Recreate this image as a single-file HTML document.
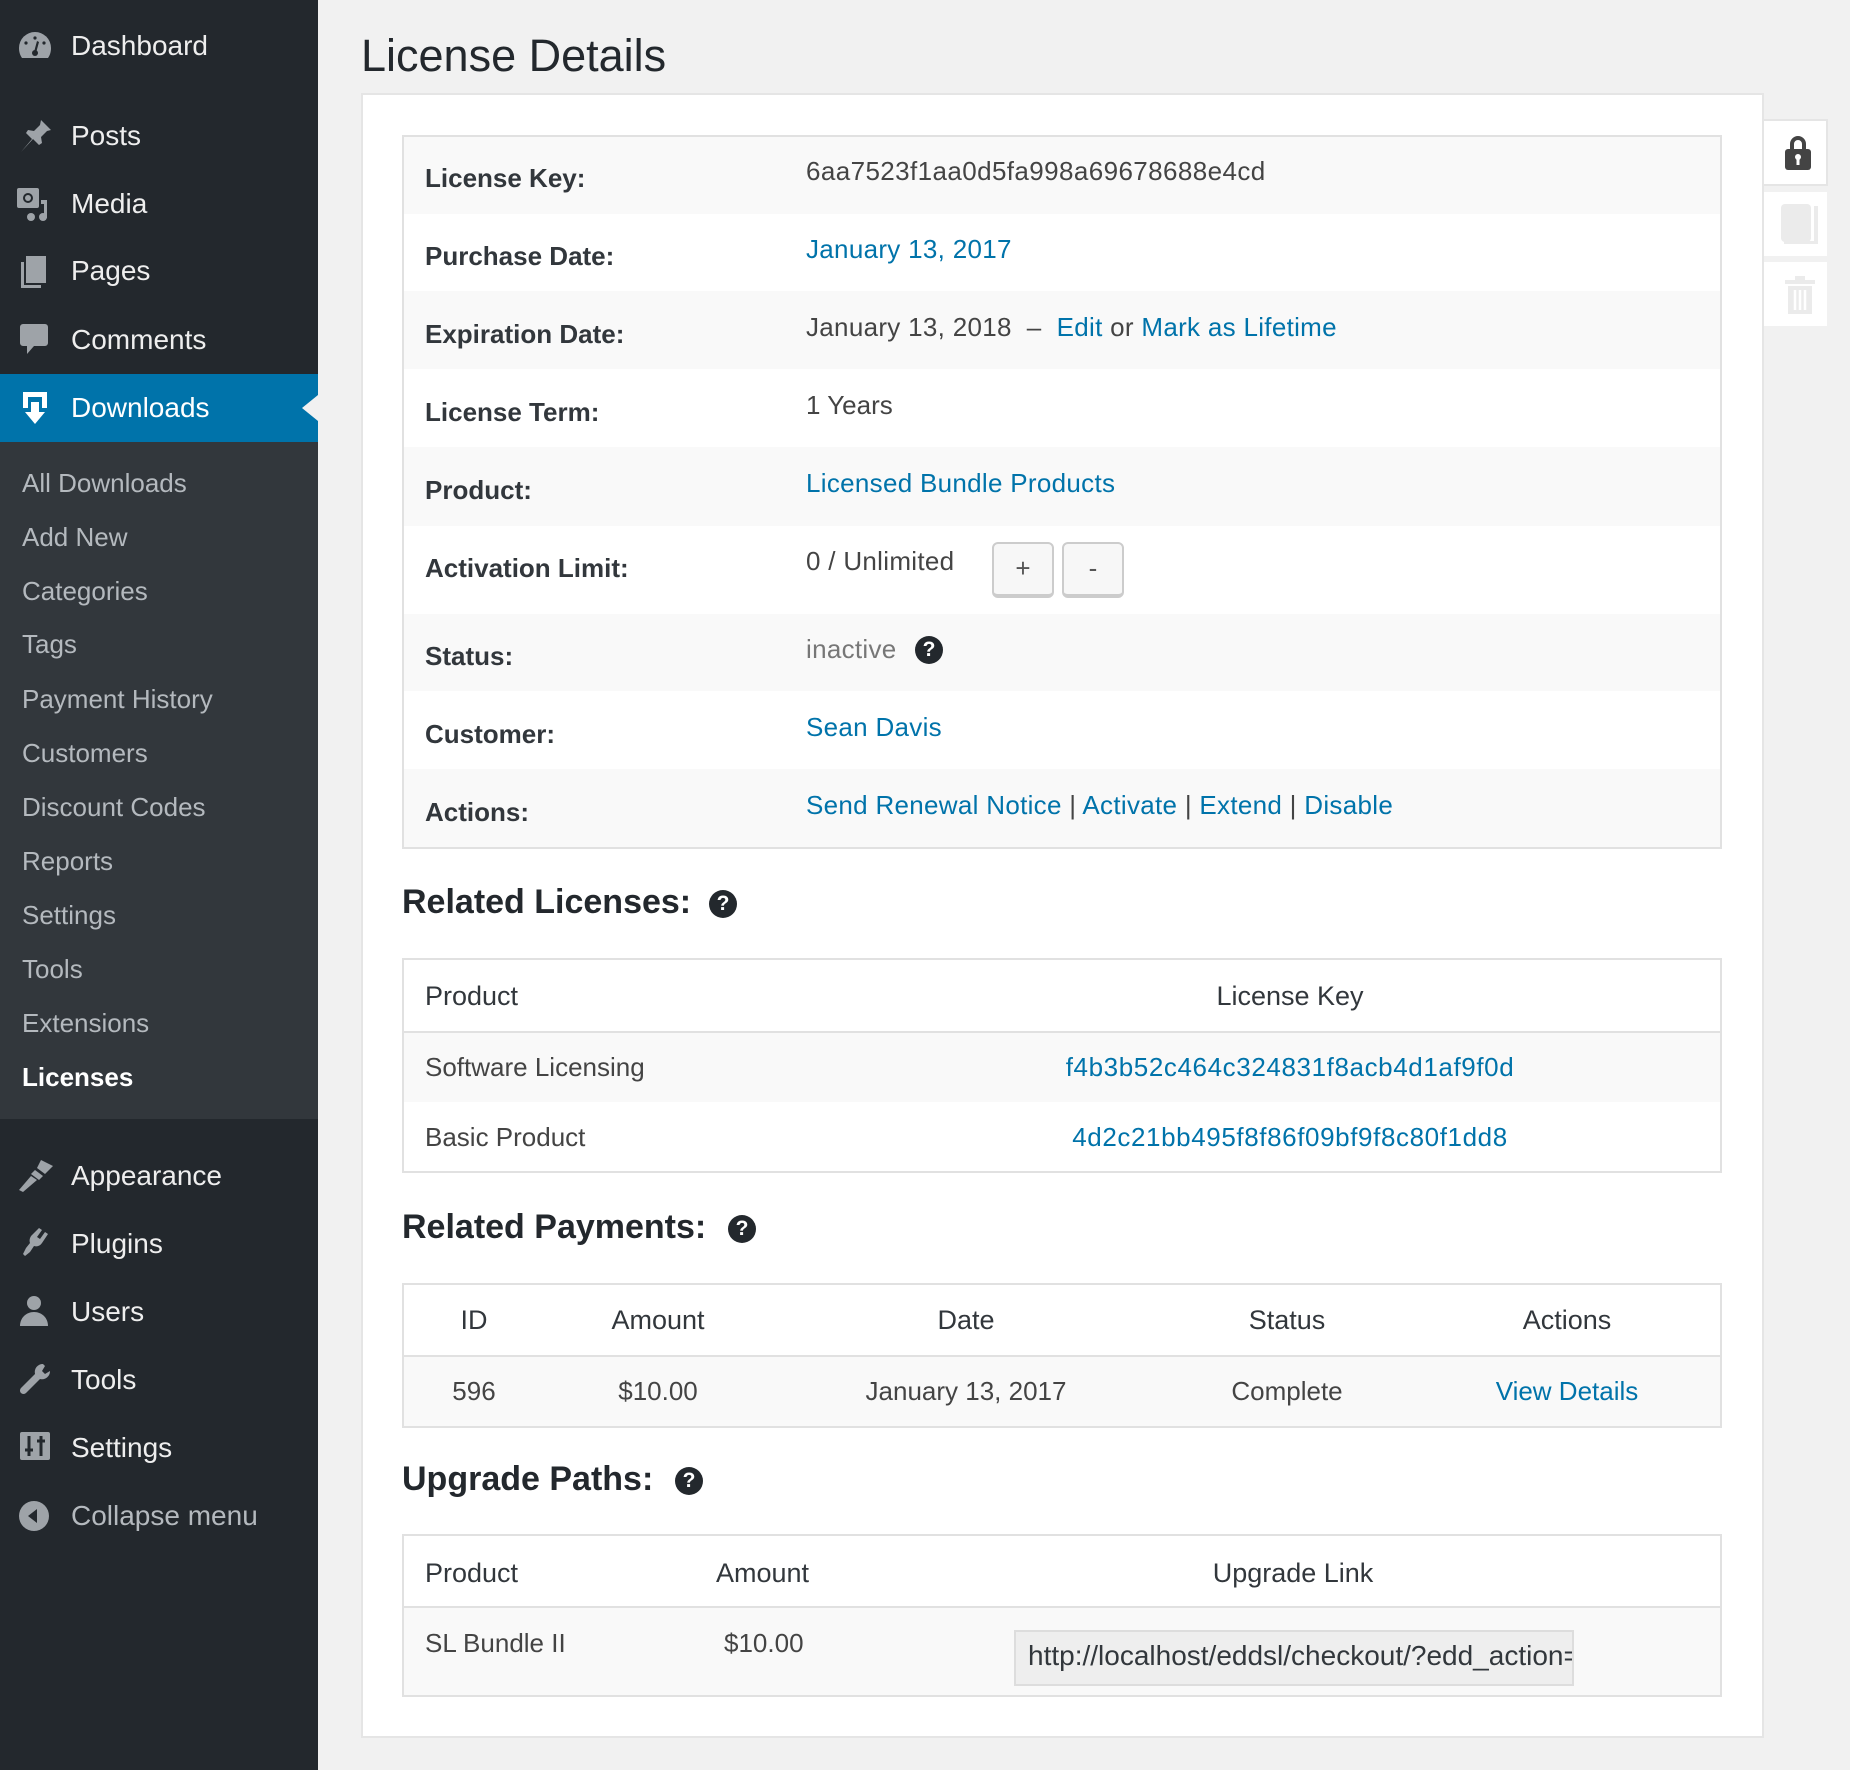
<!DOCTYPE html>
<html><head><meta charset="utf-8"><style>
*{margin:0;padding:0;box-sizing:border-box}
body{width:1850px;height:1770px;background:#f1f1f1;font-family:"Liberation Sans",sans-serif;position:relative;overflow:hidden}
.a{position:absolute;white-space:nowrap;line-height:40px;height:40px;transform:translateY(-50%)}
#sb{position:absolute;left:0;top:0;width:318px;height:1770px;background:#23282d}
.m{color:#eee;font-size:28px;left:71px}
.s{color:#b4b9be;font-size:26px;left:22px}
.ic{position:absolute;left:17px}
.box{position:absolute;background:#fff;border:2px solid #e5e5e5}
.row{position:absolute;left:404px;width:1316px}
.lb{left:425px;font-size:26px;font-weight:bold;color:#32373c}
.v{left:806px;font-size:26px;color:#444}
.h{left:402px;font-size:34px;font-weight:bold;color:#23282d}
.q{position:absolute;width:28px;height:28px;border-radius:50%;background:#23282d;color:#fff;font-size:21px;font-weight:bold;text-align:center;line-height:28px;transform:translateY(-50%)}
.c{font-size:27px;color:#32373c}
.l{color:#0073aa !important}
.ctr{transform:translate(-50%,-50%)}
.btn{position:absolute;width:62px;height:56px;background:#f7f7f7;border:2px solid #ccc;border-bottom-width:4px;border-radius:6px;font-size:26px;color:#555;text-align:center;line-height:48px}
</style></head><body>
<div id="sb">
<div style="position:absolute;top:374px;left:0;width:318px;height:68px;background:#0073aa"></div>
<div style="position:absolute;top:395px;left:302px;width:0;height:0;border-top:13px solid transparent;border-bottom:13px solid transparent;border-right:16px solid #f1f1f1"></div>
<div style="position:absolute;top:442px;left:0;width:318px;height:677px;background:#32373c"></div>
</div>
<svg class="ic" style="top:30px" width="36" height="32" viewBox="0 0 36 32"><path d="M18 2A16 16 0 0 0 2 18c0 4 1 7 3 10h26c2-3 3-6 3-10A16 16 0 0 0 18 2z" fill="#9ea3a8"/><circle cx="18" cy="23" r="3" fill="#23282d"/><path d="M17 22l3-11 2 1-3 11z" fill="#23282d"/><circle cx="9" cy="13" r="1.6" fill="#23282d"/><circle cx="27" cy="13" r="1.6" fill="#23282d"/><circle cx="18" cy="8" r="1.6" fill="#23282d"/></svg>
<svg class="ic" style="top:118px" width="36" height="36" viewBox="0 0 36 36"><path d="M24 2l10 10-4 1-6 6 1 6-3 2-6-6-12 13 11-13-6-6 2-3 6 1 6-6z" fill="#9ea3a8"/></svg>
<svg class="ic" style="top:186px" width="36" height="36" viewBox="0 0 36 36"><rect x="0" y="2" width="22" height="20" rx="2" fill="#9ea3a8"/><circle cx="11" cy="12" r="5" fill="#23282d"/><circle cx="11" cy="12" r="3" fill="#9ea3a8"/><path d="M24 14h6v18h-3V18h-3z" fill="#9ea3a8"/><circle cx="14" cy="31" r="4" fill="#9ea3a8"/><circle cx="26" cy="31" r="4" fill="#9ea3a8"/></svg>
<svg class="ic" style="top:254px" width="36" height="36" viewBox="0 0 36 36"><path d="M4 8v26h20v-3H7V8z" fill="#9ea3a8"/><rect x="9" y="2" width="20" height="27" fill="#9ea3a8"/></svg>
<svg class="ic" style="top:322px" width="36" height="36" viewBox="0 0 36 36"><path d="M6 2h22a3 3 0 0 1 3 3v16a3 3 0 0 1-3 3H17l-7 8v-8H6a3 3 0 0 1-3-3V5a3 3 0 0 1 3-3z" fill="#9ea3a8"/></svg>
<svg class="ic" style="top:390px" width="36" height="36" viewBox="0 0 36 36"><path d="M6 2h24v16h-5V7H11v11H6z" fill="#fff"/><path d="M14 12h8v10h6l-10 12-10-12h6z" fill="#fff"/></svg>
<svg class="ic" style="top:1158px" width="40" height="36" viewBox="0 0 40 36"><path d="M24 2l12 6-8 8-8-6z" fill="#9ea3a8"/><path d="M18 12l8 6-4 4-8-6z" fill="#9ea3a8"/><path d="M14 18l6 4-14 12-4-2z" fill="#9ea3a8"/></svg>
<svg class="ic" style="top:1226px" width="36" height="36" viewBox="0 0 36 36"><path d="M22 2l3 2-5 7 3 2 5-7 3 2-6 9c-2 3-5 4-8 3l-4 6-5 4-2-2 3-6 4-5c-1-3 0-6 2-8z" fill="#9ea3a8"/></svg>
<svg class="ic" style="top:1294px" width="36" height="36" viewBox="0 0 36 36"><circle cx="17" cy="9" r="7" fill="#9ea3a8"/><path d="M3 32c0-8 6-14 14-14s14 6 14 14z" fill="#9ea3a8"/></svg>
<svg class="ic" style="top:1362px" width="36" height="36" viewBox="0 0 36 36"><path d="M26 2a8 8 0 0 0-8 10L4 26a3 3 0 0 0 5 5l14-14a8 8 0 0 0 10-8l-5 3-3-3 3-5z" fill="#9ea3a8"/></svg>
<svg class="ic" style="top:1432px;left:20px" width="32" height="30" viewBox="0 0 32 30"><rect width="30" height="28" rx="2" fill="#9ea3a8"/><path d="M9 4v20M21 4v20M5 18h8M17 9h8" stroke="#23282d" stroke-width="3"/></svg>
<svg class="ic" style="top:1500px;left:18px" width="32" height="32" viewBox="0 0 32 32"><circle cx="16" cy="16" r="15" fill="#9ea3a8"/><path d="M19 9v14l-9-7z" fill="#23282d"/></svg>
<span class="a m" style="top:46px">Dashboard</span>
<span class="a m" style="top:136px">Posts</span>
<span class="a m" style="top:204px">Media</span>
<span class="a m" style="top:271px">Pages</span>
<span class="a m" style="top:340px">Comments</span>
<span class="a m" style="top:408px;color:#fff">Downloads</span>
<span class="a s" style="top:483px">All Downloads</span>
<span class="a s" style="top:537px">Add New</span>
<span class="a s" style="top:591px">Categories</span>
<span class="a s" style="top:644px">Tags</span>
<span class="a s" style="top:699px">Payment History</span>
<span class="a s" style="top:753px">Customers</span>
<span class="a s" style="top:807px">Discount Codes</span>
<span class="a s" style="top:861px">Reports</span>
<span class="a s" style="top:915px">Settings</span>
<span class="a s" style="top:969px">Tools</span>
<span class="a s" style="top:1023px">Extensions</span>
<span class="a s" style="top:1077px;color:#fff;font-weight:bold">Licenses</span>
<span class="a m" style="top:1176px">Appearance</span>
<span class="a m" style="top:1244px">Plugins</span>
<span class="a m" style="top:1312px">Users</span>
<span class="a m" style="top:1380px">Tools</span>
<span class="a m" style="top:1448px">Settings</span>
<span class="a m" style="top:1516px;color:#b4b9be">Collapse menu</span>

<span class="a" style="top:56px;left:361px;font-size:45px;line-height:56px;height:56px;color:#23282d">License Details</span>

<div class="box" style="left:1762px;top:119px;width:66px;height:67px;border-left:none"></div>
<svg style="position:absolute;left:1783px;top:132px" width="30" height="40" viewBox="0 0 30 40"><path d="M7 18v-6a8 8 0 0 1 16 0v6h-4v-6a4 4 0 0 0-8 0v6z" fill="#444"/><rect x="2" y="17" width="26" height="21" rx="3" fill="#444"/><circle cx="15" cy="25" r="3" fill="#fff"/><rect x="13.5" y="26" width="3" height="7" fill="#fff"/></svg>
<div style="position:absolute;left:1764px;top:192px;width:63px;height:64px;background:#fff"></div>
<svg style="position:absolute;left:1780px;top:202px" width="40" height="46" viewBox="0 0 40 46"><rect x="1" y="2" width="30" height="38" rx="4" fill="#ebebeb"/><path d="M34 4h4v38H4v-3h30z" fill="#ebebeb"/></svg>
<div style="position:absolute;left:1764px;top:262px;width:63px;height:64px;background:#fff"></div>
<svg style="position:absolute;left:1782px;top:274px" width="36" height="42" viewBox="0 0 36 42"><path d="M13 2h10v4h10v4H3V6h10z" fill="#ebebeb"/><path d="M6 12h24v28H6z" fill="#ebebeb"/><path d="M13 16v20M18 16v20M23 16v20" stroke="#fff" stroke-width="2.5"/></svg>

<div class="box" style="left:361px;top:93px;width:1403px;height:1645px"></div>

<div class="box" style="left:402px;top:135px;width:1320px;height:714px;background:#f9f9f9;border-color:#e1e1e1"></div>
<div class="row" style="top:214px;height:77px;background:#fff"></div>
<div class="row" style="top:369px;height:78px;background:#fff"></div>
<div class="row" style="top:526px;height:88px;background:#fff"></div>
<div class="row" style="top:691px;height:78px;background:#fff"></div>
<span class="a lb" style="top:178px">License Key:</span>
<span class="a lb" style="top:256px">Purchase Date:</span>
<span class="a lb" style="top:334px">Expiration Date:</span>
<span class="a lb" style="top:412px">License Term:</span>
<span class="a lb" style="top:490px">Product:</span>
<span class="a lb" style="top:568px">Activation Limit:</span>
<span class="a lb" style="top:656px">Status:</span>
<span class="a lb" style="top:734px">Customer:</span>
<span class="a lb" style="top:812px">Actions:</span>
<span class="a v" style="top:171px;letter-spacing:0.4px">6aa7523f1aa0d5fa998a69678688e4cd</span>
<span class="a v l" style="top:249px;letter-spacing:0.3px">January 13, 2017</span>
<span class="a v" style="top:327px;letter-spacing:0.3px">January 13, 2018 &nbsp;–&nbsp; <span class="l">Edit</span> or <span class="l">Mark as Lifetime</span></span>
<span class="a v" style="top:405px">1 Years</span>
<span class="a v l" style="top:483px;letter-spacing:0.3px">Licensed Bundle Products</span>
<span class="a v" style="top:561px;letter-spacing:0.3px">0 / Unlimited</span>
<div class="btn" style="left:992px;top:542px">+</div>
<div class="btn" style="left:1062px;top:542px">-</div>
<span class="a v" style="top:649px;color:#777;letter-spacing:0.3px">inactive</span>
<span class="q" style="left:915px;top:650px">?</span>
<span class="a v l" style="top:727px;letter-spacing:0.3px">Sean Davis</span>
<span class="a v" style="top:805px;letter-spacing:0.3px"><span class="l">Send Renewal Notice</span> | <span class="l">Activate</span> | <span class="l">Extend</span> | <span class="l">Disable</span></span>

<span class="a h" style="top:902px">Related Licenses:</span>
<span class="q" style="left:709px;top:904px">?</span>
<div class="box" style="left:402px;top:958px;width:1320px;height:215px;border-color:#e1e1e1"></div>
<div class="row" style="top:1031px;height:71px;background:#f9f9f9;border-top:2px solid #e1e1e1"></div>
<span class="a c" style="top:996px;left:425px">Product</span>
<span class="a c ctr" style="top:996px;left:1290px">License Key</span>
<span class="a c" style="top:1067px;left:425px;font-size:26px;color:#444">Software Licensing</span>
<span class="a c ctr l" style="top:1067px;left:1290px;font-size:26px;letter-spacing:0.6px">f4b3b52c464c324831f8acb4d1af9f0d</span>
<span class="a c" style="top:1137px;left:425px;font-size:26px;color:#444">Basic Product</span>
<span class="a c ctr l" style="top:1137px;left:1290px;font-size:26px;letter-spacing:0.6px">4d2c21bb495f8f86f09bf9f8c80f1dd8</span>

<span class="a h" style="top:1227px">Related Payments:</span>
<span class="q" style="left:728px;top:1229px">?</span>
<div class="box" style="left:402px;top:1283px;width:1320px;height:145px;border-color:#e1e1e1"></div>
<div class="row" style="top:1355px;height:71px;background:#f9f9f9;border-top:2px solid #e1e1e1"></div>
<span class="a c ctr" style="top:1320px;left:474px">ID</span>
<span class="a c ctr" style="top:1320px;left:658px">Amount</span>
<span class="a c ctr" style="top:1320px;left:966px">Date</span>
<span class="a c ctr" style="top:1320px;left:1287px">Status</span>
<span class="a c ctr" style="top:1320px;left:1567px">Actions</span>
<span class="a c ctr" style="top:1391px;left:474px;font-size:26px;color:#444">596</span>
<span class="a c ctr" style="top:1391px;left:658px;font-size:26px;color:#444">$10.00</span>
<span class="a c ctr" style="top:1391px;left:966px;font-size:26px;color:#444">January 13, 2017</span>
<span class="a c ctr" style="top:1391px;left:1287px;font-size:26px;color:#444">Complete</span>
<span class="a c ctr l" style="top:1391px;left:1567px;font-size:26px">View Details</span>

<span class="a h" style="top:1479px">Upgrade Paths:</span>
<span class="q" style="left:675px;top:1481px">?</span>
<div class="box" style="left:402px;top:1534px;width:1320px;height:163px;border-color:#e1e1e1"></div>
<div class="row" style="top:1606px;height:89px;background:#f9f9f9;border-top:2px solid #e1e1e1"></div>
<span class="a c" style="top:1573px;left:425px">Product</span>
<span class="a c" style="top:1573px;left:716px">Amount</span>
<span class="a c ctr" style="top:1573px;left:1293px">Upgrade Link</span>
<span class="a c" style="top:1643px;left:425px;font-size:26px;color:#444">SL Bundle II</span>
<span class="a c" style="top:1643px;left:724px;font-size:26px;color:#444">$10.00</span>
<div style="position:absolute;left:1014px;top:1630px;width:560px;height:56px;background:#eee;border:2px solid #ddd;overflow:hidden;font-size:28px;line-height:48px;padding-left:12px;color:#32373c;white-space:nowrap">http://localhost/eddsl/checkout/?edd_action=sl_license_upgrade</div>
</body></html>
